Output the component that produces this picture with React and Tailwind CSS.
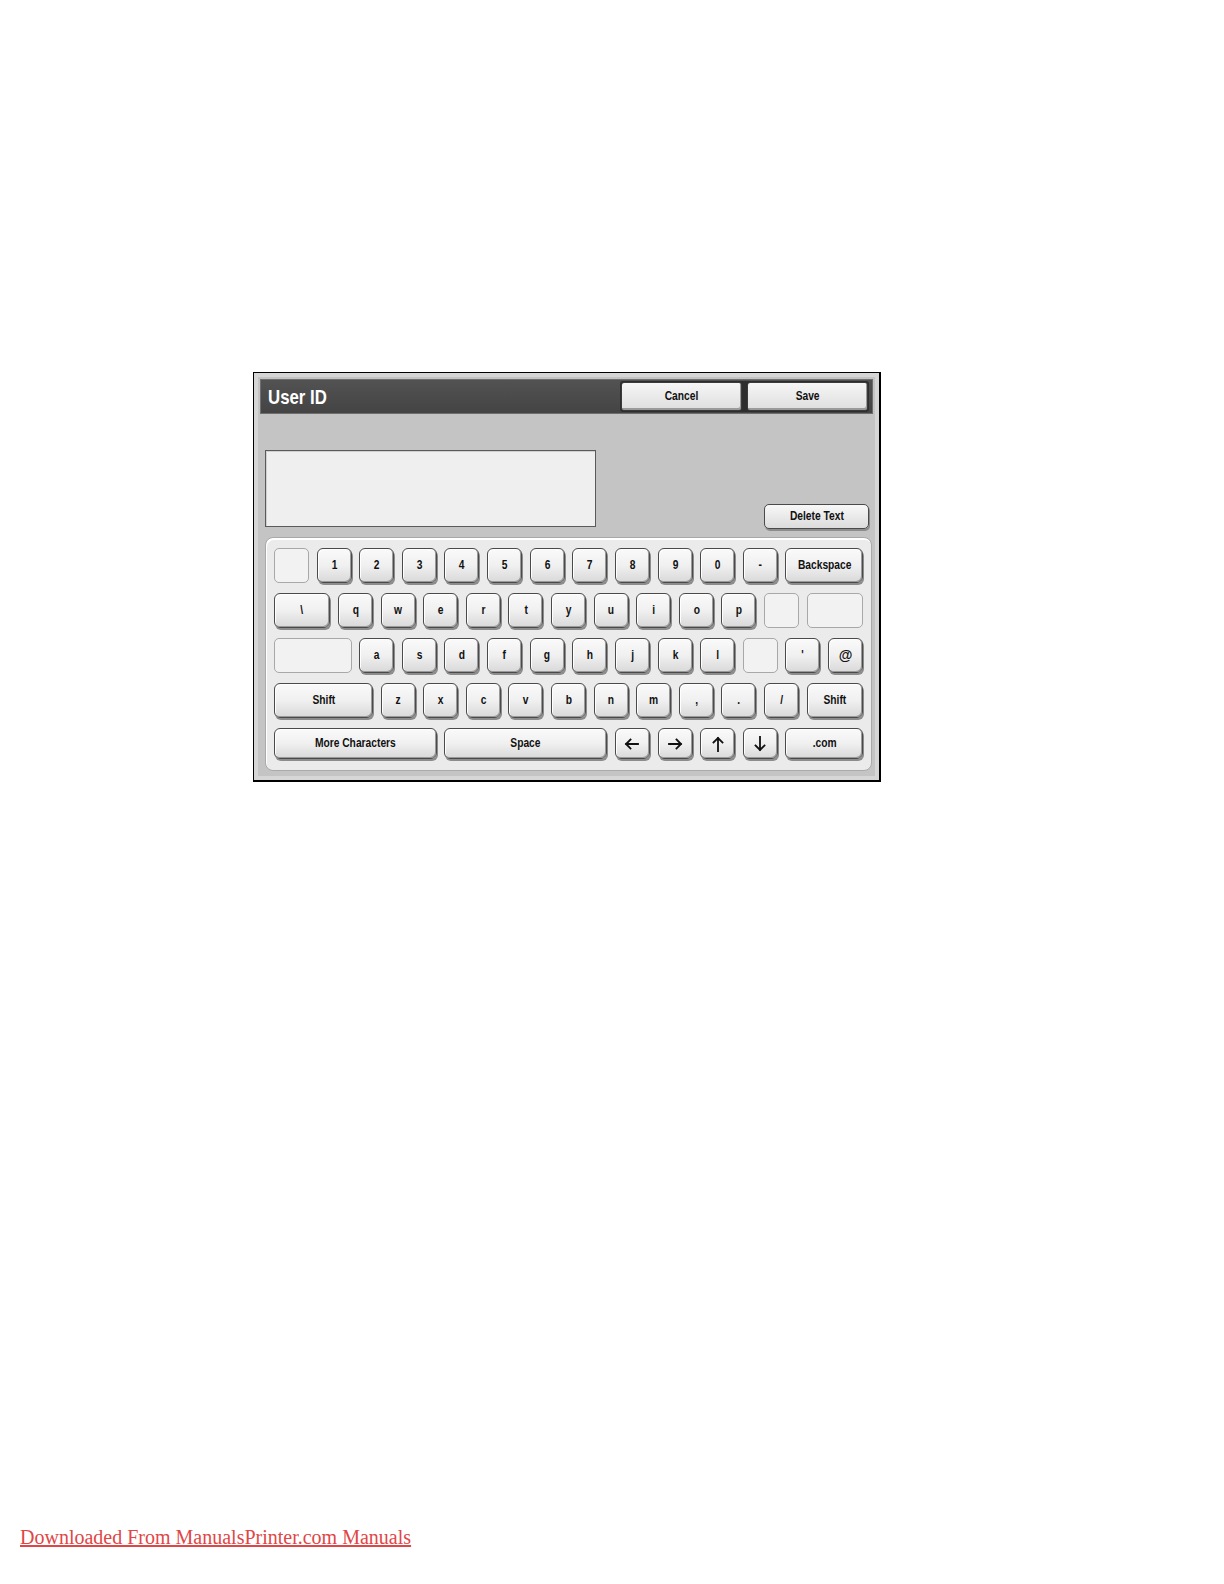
import * as React from 'react';

const sans = 'font-["Liberation_Sans",Arial,sans-serif]';

const keyBase =
  'flex items-center justify-center rounded-[6px] border border-[#4a4a4a] bg-gradient-to-b from-[#fafafa] via-[#f0f0f0] to-[#d9d9d9] shadow-[inset_-1px_-1px_0_#9a9a9a,inset_1px_1px_0_#ffffff,1px_2px_0_#8c8c8c] text-[12.5px] font-bold text-[#111]';

const blankKey = 'rounded-[5px] border border-[#a8a8a8] bg-[#f2f2f2]';

// narrow label, the panel uses a condensed face
function Label({ children }) {
  return <span className="inline-block scale-x-[0.82] whitespace-nowrap">{children}</span>;
}

function Arrow({ dir }) {
  const paths = {
    left: 'M15 9H3M7.5 4.5L3 9l4.5 4.5',
    right: 'M3 9h12M10.5 4.5L15 9l-4.5 4.5',
    up: 'M9 16V3M4.5 7.5L9 3l4.5 4.5',
    down: 'M9 2v13M4.5 10.5L9 15l4.5-4.5',
  };
  return (
    <svg width="18" height="18" viewBox="0 0 18 18" fill="none" stroke="#111" strokeWidth="1.8" strokeLinecap="square">
      <path d={paths[dir]} />
    </svg>
  );
}

function Key({ span = 'col-span-2', children, blank }) {
  if (blank) return <div className={`${span} ${blankKey}`} />;
  return <div className={`${span} ${keyBase}`}>{children}</div>;
}

const row1 = ['1', '2', '3', '4', '5', '6', '7', '8', '9', '0', '-'];
const row2 = ['q', 'w', 'e', 'r', 't', 'y', 'u', 'i', 'o', 'p'];
const row3 = ['a', 's', 'd', 'f', 'g', 'h', 'j', 'k', 'l'];
const row4 = ['z', 'x', 'c', 'v', 'b', 'n', 'm', ',', '.', '/'];

function Keyboard() {
  return (
    <div className="ml-[5px] h-[234px] w-[607px] rounded-[8px] border border-[#a9a9a9] bg-[#ebebeb] pl-[8px] pt-[10px] shadow-[inset_1px_2px_0_#ffffff]">
      <div className="grid w-[589px] grid-cols-[repeat(28,minmax(0,1fr))] grid-rows-[35px_35px_35px_35px_31px] gap-x-[7.6px] gap-y-[10px]">
        <Key blank />
        {row1.map((k) => (
          <Key key={k}>
            <Label>{k}</Label>
          </Key>
        ))}
        <Key span="col-span-4">
          <Label>Backspace</Label>
        </Key>

        <Key span="col-span-3">
          <Label>\</Label>
        </Key>
        {row2.map((k) => (
          <Key key={k}>
            <Label>{k}</Label>
          </Key>
        ))}
        <Key blank />
        <Key span="col-span-3" blank />

        <Key span="col-span-4" blank />
        {row3.map((k) => (
          <Key key={k}>
            <Label>{k}</Label>
          </Key>
        ))}
        <Key blank />
        <Key>
          <Label>'</Label>
        </Key>
        <Key>
          <span className="text-[14px]">@</span>
        </Key>

        <Key span="col-span-5">
          <Label>Shift</Label>
        </Key>
        {row4.map((k) => (
          <Key key={k}>
            <Label>{k}</Label>
          </Key>
        ))}
        <Key span="col-span-3">
          <Label>Shift</Label>
        </Key>

        <Key span="col-span-8">
          <Label>More Characters</Label>
        </Key>
        <Key span="col-span-8">
          <Label>Space</Label>
        </Key>
        <Key>
          <Arrow dir="left" />
        </Key>
        <Key>
          <Arrow dir="right" />
        </Key>
        <Key>
          <Arrow dir="up" />
        </Key>
        <Key>
          <Arrow dir="down" />
        </Key>
        <Key span="col-span-4">
          <Label>.com</Label>
        </Key>
      </div>
    </div>
  );
}

const topBtn =
  'flex h-[29px] w-[121px] items-center justify-center rounded-[3px] border border-[#3a3a3a] bg-gradient-to-b from-[#f6f6f6] to-[#dedede] text-[12.5px] font-bold text-[#111] shadow-[inset_-1px_-2px_0_#9a9a9a]';

export default function App() {
  return (
    <div className={`flex h-[1584px] w-[1224px] flex-col bg-white ${sans}`}>
      <div className="ml-[253px] mt-[372px] w-[628px] border border-black border-b-2 border-r-2 bg-[#c4c4c4] pb-[9px] pl-[6px] pr-[6px] pt-[6px] shadow-[inset_0_0_0_4px_#d6d6d6]">
        {/* title bar */}
        <div className="flex h-[35px] items-center justify-between border border-[#6e6e6e] bg-gradient-to-b from-[#525252] to-[#444444] pl-[7px] pr-[3px]">
          <span className="inline-block origin-left scale-x-[0.8] text-[21px] font-bold leading-none text-white">User ID</span>
          <div className="flex gap-[5px] rounded-[3px] bg-[#2e2e2e] p-[1px]">
            <button className={topBtn}>
              <Label>Cancel</Label>
            </button>
            <button className={topBtn}>
              <Label>Save</Label>
            </button>
          </div>
        </div>

        {/* text field row */}
        <div className="flex h-[123px] items-start justify-between">
          <div className="ml-[5px] mt-[36px] h-[77px] w-[331px] border border-[#5a5a5a] bg-[#efefef] shadow-[inset_1px_1px_0_#d0d0d0]" />
          <button className="mr-[4px] mt-[90px] flex h-[25px] w-[105px] items-center justify-center rounded-[5px] border border-[#4a4a4a] bg-gradient-to-b from-[#f8f8f8] to-[#dcdcdc] text-[12.5px] font-bold text-[#111] shadow-[1px_2px_0_#8c8c8c]">
            <Label>Delete Text</Label>
          </button>
        </div>

        <Keyboard />
      </div>

      <a
        href="#"
        className='ml-[20px] mt-[744px] self-start font-["Liberation_Serif",serif] text-[20px] leading-[23px] text-[#e04646] underline'
      >
        Downloaded From ManualsPrinter.com Manuals
      </a>
    </div>
  );
}
